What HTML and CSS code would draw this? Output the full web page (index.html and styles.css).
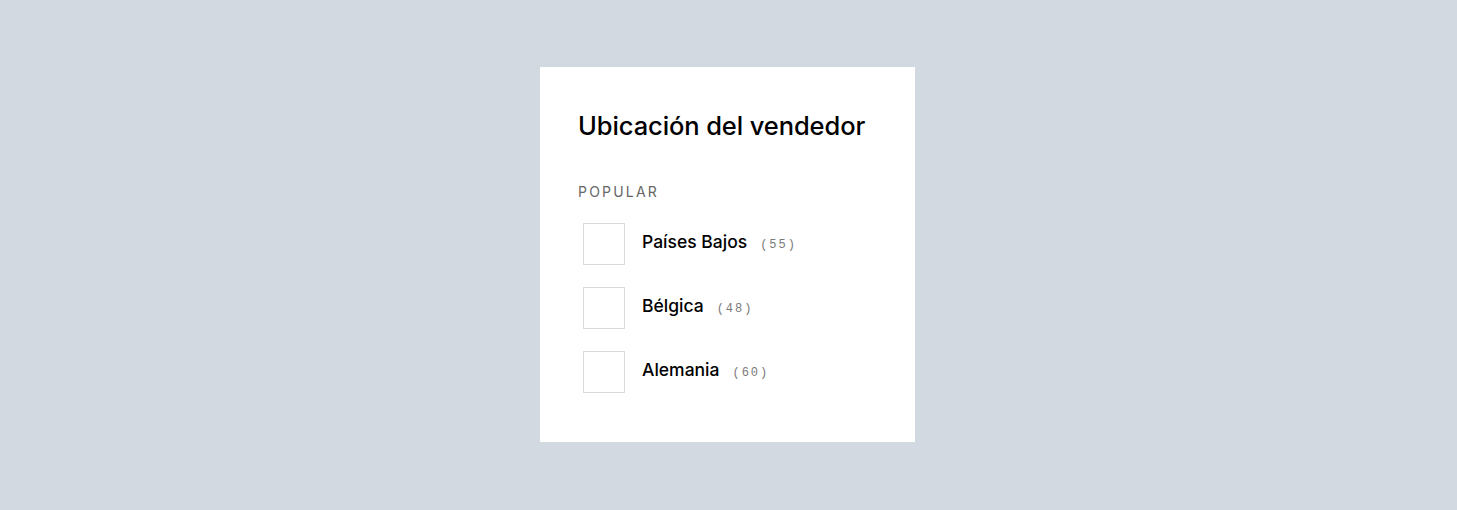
FILE: index.html
```html
<!DOCTYPE html>
<html lang="es">
<head>
<meta charset="utf-8">
<title>Ubicación del vendedor</title>
<link rel="stylesheet" href="styles.css">
</head>
<body>
<main class="page">
  <section class="card">
    <h2 class="title">Ubicación del vendedor</h2>
    <div class="section-label">POPULAR</div>
    <ul class="options">
      <li class="option">
        <span class="box"></span>
        <span class="label"><span class="name">Países Bajos</span><span class="count">(55)</span></span>
      </li>
      <li class="option">
        <span class="box"></span>
        <span class="label"><span class="name">Bélgica</span><span class="count">(48)</span></span>
      </li>
      <li class="option">
        <span class="box"></span>
        <span class="label"><span class="name">Alemania</span><span class="count">(60)</span></span>
      </li>
    </ul>
  </section>
</main>
</body>
</html>
```

FILE: styles.css
```css
html, body {
  margin: 0;
  padding: 0;
}
body {
  background: #d3d9e0;
  font-family: Inter, "Liberation Sans", sans-serif;
  color: #000;
}
.page {
  height: 510px;
  display: flex;
  align-items: center;
  justify-content: center;
}
.card {
  width: 375px;
  height: 375px;
  box-sizing: border-box;
  background: #fff;
  padding: 44px 38px 0 38px;
  margin-left: -2px;
  margin-top: -2px;
}
.title {
  margin: 0;
  font-size: 25.5px;
  line-height: 30px;
  font-weight: 500;
  color: #000;
  letter-spacing: -0.1px;
}
.section-label {
  margin-top: 42px;
  font-size: 14px;
  line-height: 18px;
  letter-spacing: 2.2px;
  color: #666;
}
.options {
  list-style: none;
  margin: 22px 0 0 0;
  padding: 0;
  display: flex;
  flex-direction: column;
  gap: 22px;
}
.option {
  display: flex;
  align-items: center;
  height: 42px;
  padding-left: 5px;
}
.box {
  width: 42px;
  height: 42px;
  box-sizing: border-box;
  border: 1px solid #d8dadd;
  margin-right: 17px;
  flex: none;
}
.label {
  display: flex;
  align-items: baseline;
  margin-bottom: 3px;
}
.name {
  font-size: 17.5px;
  line-height: 22px;
  font-weight: 500;
  color: #000;
}
.count {
  margin-left: 13px;
  font-family: "Liberation Mono", "DejaVu Sans Mono", monospace;
  font-size: 12px;
  letter-spacing: 2px;
  color: #7a7a7a;
}
```
